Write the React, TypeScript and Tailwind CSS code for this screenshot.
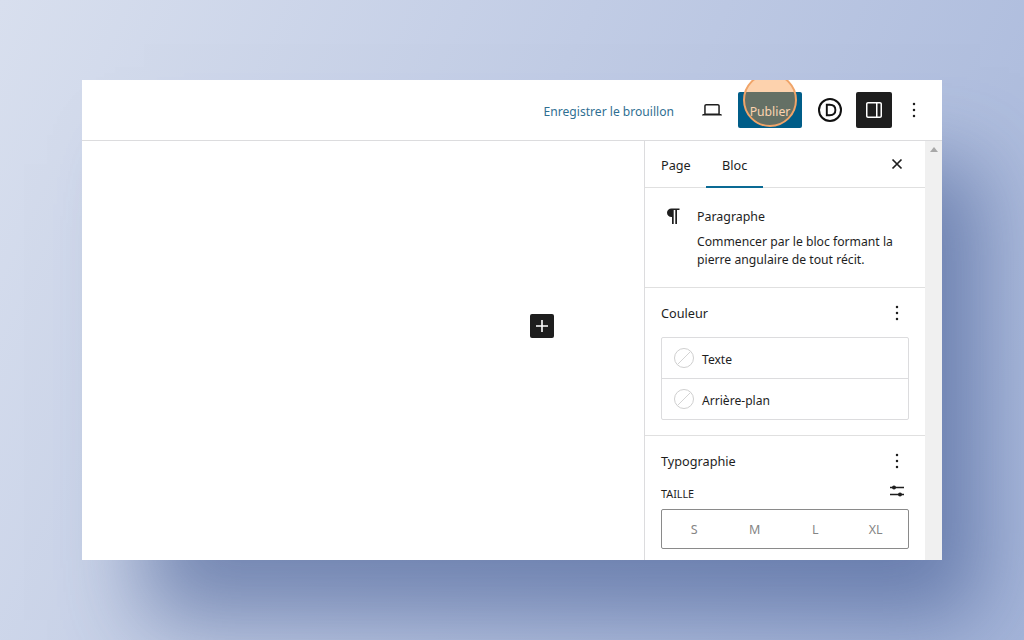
import React from 'react';

const Dots = () => (
  <svg width="24" height="24" viewBox="0 0 24 24" fill="currentColor">
    <circle cx="12" cy="6" r="1.25" />
    <circle cx="12" cy="12" r="1.25" />
    <circle cx="12" cy="18" r="1.25" />
  </svg>
);

const Swatch = () => (
  <svg width="20" height="20" viewBox="0 0 20 20" fill="none" className="shrink-0">
    <circle cx="10" cy="10" r="9.500" fill="#fff" stroke="#cfcfcf" />
    <path d="M3.500 16.500 16.500 3.500" stroke="#d4d4d4" />
  </svg>
);

const PanelHeader = ({ title }: { title: string }) => (
  <div className="flex items-center justify-between h-6 text-[#1e1e1e]">
    <span className="text-[12.7px]">{title}</span>
    <span className="-mt-[2px]"><Dots /></span>
  </div>
);

export default function App() {
  return (
    <div
      className="h-[640px] w-[1024px] overflow-hidden pt-20 pl-[82px] bg-[linear-gradient(115deg,#d8dfee_0%,#c1cce5_45%,#a6b6da_100%)]"
      style={{ fontFamily: '"Noto Sans", "Open Sans", sans-serif' }}
    >
      <div className="relative h-[480px] w-[860px] flex flex-col overflow-hidden bg-white shadow-[50px_72px_80px_-12px_rgba(50,75,135,0.55)]">
        <header className="h-[61px] shrink-0 flex items-center justify-end border-b border-[#dcdcde] pr-[16px]">
          <span className="text-[12.1px] text-[#2f6f92] mr-[26px] pt-[4px]">Enregistrer le brouillon</span>
          <svg width="24" height="24" viewBox="0 0 24 24" fill="#1e1e1e" className="mr-[14px]">
            <path d="M20.500 16h-.7V8c0-1.100-.9-2-2-2H6.200c-1.100 0-2 .9-2 2v8h-.7c-.8 0-1.500.7-1.500 1.500h20c0-.8-.7-1.500-1.500-1.500zM5.700 8c0-.3.2-.5.5-.5h11.600c.3 0 .5.2.5.5v7.600H5.700V8z" />
          </svg>
          <button className="h-9 w-16 rounded-[2px] bg-[#005d88] text-[12.2px] text-white mr-[16px] pt-[4px]">Publier</button>
          <svg width="24" height="24" viewBox="0 0 24 24" fill="none" stroke="#111" className="mr-[14px]">
            <circle cx="12" cy="12" r="11" strokeWidth="2" />
            <path d="M8.800 6.800h2.900c3.600 0 5.700 2.100 5.700 5.200s-2.100 5.200-5.700 5.200H8.800V6.800z" strokeWidth="1.900" />
          </svg>
          <div className="h-9 w-9 flex items-center justify-center rounded-[2px] bg-[#1e1e1e] mr-[10px]">
            <svg width="24" height="24" viewBox="0 0 24 24" fill="#fff">
              <path d="M18 4H6c-1.100 0-2 .9-2 2v12c0 1.100.9 2 2 2h12c1.100 0 2-.9 2-2V6c0-1.100-.9-2-2-2zM5.500 18V6c0-.3.2-.5.5-.5h8v13H6c-.3 0-.5-.2-.5-.5zm13 0c0 .3-.2.5-.5.5h-2.500v-13H18c.3 0 .5.2.5.5v12z" />
            </svg>
          </div>
          <span className="text-[#1e1e1e]"><Dots /></span>
        </header>

        <div className="flex-1 min-h-0 flex">
          <main className="flex-1 flex justify-end pr-[90px] pt-[173px]">
            <div className="h-6 w-6 flex items-center justify-center rounded-[2px] bg-[#1e1e1e]">
              <svg width="24" height="24" viewBox="0 0 24 24" fill="#fff">
                <path d="M18 11.200h-5.200V6h-1.600v5.200H6v1.600h5.200V18h1.600v-5.200H18z" />
              </svg>
            </div>
          </main>

          <aside className="w-[281px] shrink-0 border-l border-[#dcdcde] overflow-hidden text-[#1e1e1e]">
            <div className="h-[47px] flex items-stretch border-b border-[#e0e0e0] pr-[16px] text-[12.7px]">
              <div className="w-[61px] pl-[16px] flex items-center pt-[4px]">Page</div>
              <div className="w-[57px] pl-[16px] flex items-center -mb-px border-b-2 border-[#0a6a94] pt-[5px]">Bloc</div>
              <div className="ml-auto flex items-center">
                <svg width="24" height="24" viewBox="0 0 24 24" fill="none" stroke="#1e1e1e" strokeWidth="1.700">
                  <path d="M7.500 7.500l9 9M16.500 7.500l-9 9" />
                </svg>
              </div>
            </div>

            <section className="h-[100px] flex gap-[12px] border-b border-[#e0e0e0] pt-[16px] pl-[16px] pr-[16px]">
              <svg width="24" height="24" viewBox="0 0 24 24" fill="#1e1e1e" className="shrink-0">
                <path d="M18.500 4.500h-8C8 4.500 6 6.300 6 8.700s2 4.200 4.500 4.200h.5V20h1.700V6h1.600v14h1.700V6h2.500V4.500z" />
              </svg>
              <div>
                <h2 className="text-[12.4px] leading-[26px]">Paragraphe</h2>
                <p className="text-[12.2px] leading-[18px] mt-[3px]">Commencer par le bloc formant la pierre angulaire de tout récit.</p>
              </div>
            </section>

            <section className="h-[148px] border-b border-[#e0e0e0] pt-[14px] px-[16px]">
              <PanelHeader title="Couleur" />
              <div className="mt-[11px] border border-[#dcdcde] rounded-[2px]">
                <div className="h-[41px] flex items-center gap-[8px] px-[12px] border-b border-[#dcdcde] text-[12.1px]">
                  <Swatch />
                  <span className="pt-[4px]">Texte</span>
                </div>
                <div className="h-[40px] flex items-center gap-[8px] px-[12px] text-[12.1px]">
                  <Swatch />
                  <span className="pt-[4px]">Arrière-plan</span>
                </div>
              </div>
            </section>

            <section className="pt-[14px] px-[16px]">
              <PanelHeader title="Typographie" />
              <div className="mt-[8px] flex items-center justify-between h-6">
                <span className="text-[10.8px] uppercase">Taille</span>
                <svg width="24" height="24" viewBox="0 0 24 24" fill="#1e1e1e">
                  <path d="M5 4.700h14v1.500H5zM5 11.700h14v1.500H5z" />
                  <circle cx="9" cy="5.500" r="2" />
                  <circle cx="15" cy="12.500" r="2" />
                </svg>
              </div>
              <div className="mt-[3px] h-10 grid grid-cols-4 items-center border border-[#8a8a8a] rounded-[2px] text-[12.5px] text-[#858585] text-center px-[2px] pt-[3px]">
                <span>S</span>
                <span>M</span>
                <span>L</span>
                <span>XL</span>
              </div>
            </section>
          </aside>

          <div className="w-[17px] shrink-0 bg-[#f0f0f0] flex justify-center pt-[6px]">
            <div className="h-0 w-0 border-x-[4px] border-x-transparent border-b-[5px] border-b-[#a8a8a8]" />
          </div>
        </div>

        <div className="absolute left-[661px] top-[-7px] h-[54px] w-[54px] rounded-full border-2 border-[#f0a468] bg-[#f98f33]/40" />
      </div>
    </div>
  );
}
